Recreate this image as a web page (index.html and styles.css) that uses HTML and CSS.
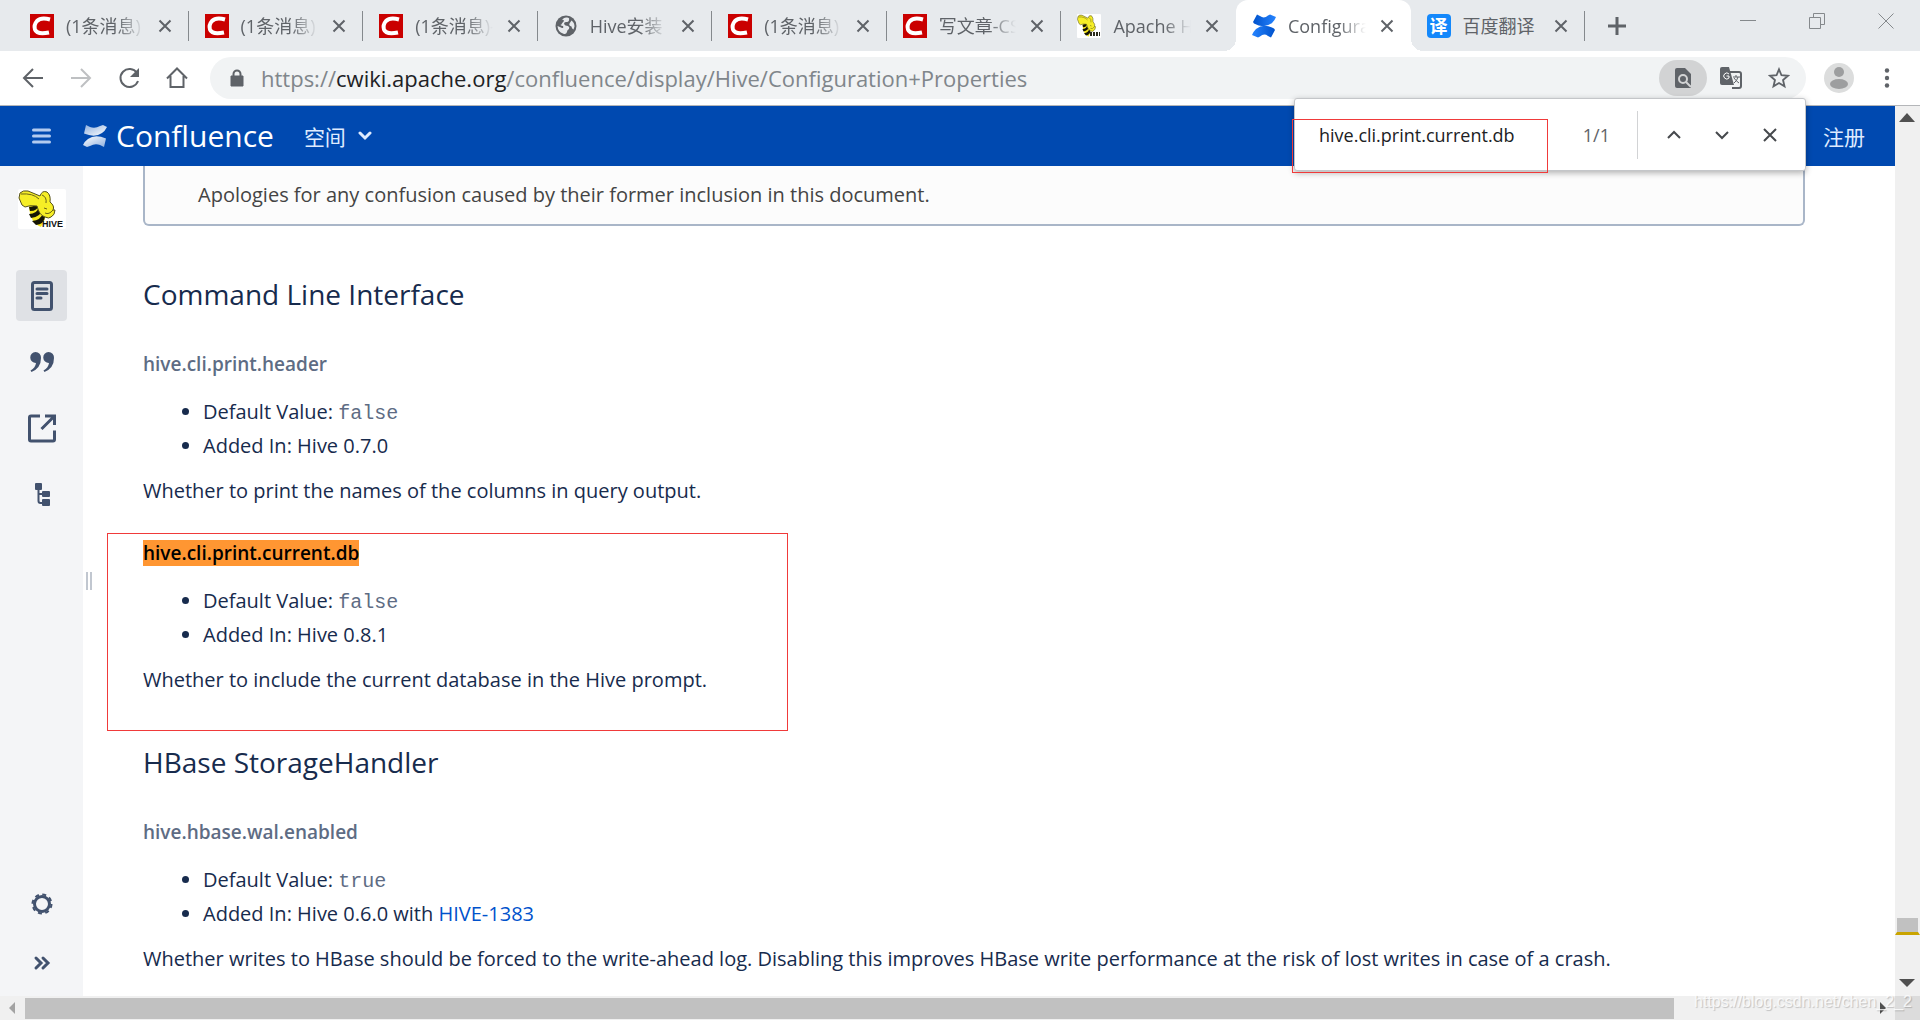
FILE: index.html
```html
<!DOCTYPE html>
<html lang="zh-CN">
<head>
  <meta charset="UTF-8" />
  <meta name="viewport" content="width=device-width, initial-scale=1.0"/>
  <title>Configuration Properties</title>
  <link rel="stylesheet" href="styles.css">
</head>
<body>
  <!-- shared icons -->
  <svg class="sprite" aria-hidden="true">
    <symbol id="csdn" viewBox="0 0 24 24">
      <rect width="24" height="24" fill="#ca0000"/>
      <path d="M20 5.500Q11 3 7 7Q3.500 11 5 15.500Q7 21 19 18.500" fill="none" stroke="#fff" stroke-width="4"/>
    </symbol>
    <symbol id="close" viewBox="0 0 14 14">
      <path d="M1.500 1.500l11 11M12.500 1.500l-11 11" stroke="currentColor" stroke-width="2"/>
    </symbol>
    <symbol id="bee" viewBox="0 0 48 40" preserveAspectRatio="none">
      <rect width="48" height="40" rx="2" fill="#fff"/>
      <path d="M11 17Q17 13 22 18L27 30L23 38Q12 34 11 17z" fill="#f6e71d"/>
      <path d="M11 18q5 0 6-3l3 1q0 6-8 6zM11 25q8 0 10-7l3 2q-1 8-11 9zM14 32q9-1 11-8l2 4q-1 7-9 8z" fill="#151505"/>
      <path d="M2 4Q5 1 10 2L22 7Q24 1 29 3Q33 6 32 13Q37 17 35 21L37 21Q37 26 33 28Q31 30 27 28Q21 26 19 17Q11 16 7 18L4 16L1 9z" fill="#f6ee26" stroke="#55501c"/>
      <path d="M3 5Q15 4 21 10M24 6Q29 8 28 14M26 19l3 1M27 24q4 2 8-3" fill="none" stroke="#6b6418"/>
    </symbol>
    <linearGradient id="blueTop" x1="0" y1="0" x2="1" y2="0"><stop offset="0" stop-color="#0052cc"/><stop offset="1" stop-color="#2684ff"/></linearGradient>
    <linearGradient id="blueBottom" x1="0" y1="0" x2="1" y2="0"><stop offset="0" stop-color="#2684ff"/><stop offset="1" stop-color="#0052cc"/></linearGradient>
    <linearGradient id="whiteTop" x1="0" y1="0" x2="1" y2="1"><stop offset="0" stop-color="#8fb0df"/><stop offset="1" stop-color="#fff"/></linearGradient>
    <linearGradient id="whiteBottom" x1="0" y1="0" x2="1" y2="1"><stop offset="0" stop-color="#fff"/><stop offset="1" stop-color="#8fb0df"/></linearGradient>
  </svg>

  <div class="tabstrip">
    <div class="tabs">
      <div class="tab">
        <svg class="favicon"><use href="#csdn"/></svg>
        <span class="tab-title">(1条消息)</span>
        <button class="tab-close" aria-label="关闭"><svg><use href="#close"/></svg></button>
      </div>
      <div class="tab">
        <svg class="favicon"><use href="#csdn"/></svg>
        <span class="tab-title">(1条消息)</span>
        <button class="tab-close" aria-label="关闭"><svg><use href="#close"/></svg></button>
      </div>
      <div class="tab">
        <svg class="favicon"><use href="#csdn"/></svg>
        <span class="tab-title">(1条消息)-</span>
        <button class="tab-close" aria-label="关闭"><svg><use href="#close"/></svg></button>
      </div>
      <div class="tab">
        <svg class="favicon" viewBox="0 0 24 24">
          <circle cx="12" cy="12" r="10.500" fill="#5f6368"/>
          <path d="M12 3.500Q16 3 15 6Q15 8 12 8Q10 8 10 10Q11 12 14 12Q16 13 15 15Q13 16 13 18Q12 21 9 19.500Q4 18 3.500 12Q6 13 8 14Q10 14 9 12Q6 12 6 9Q8 4 12 3.500z" fill="#e7eaed"/>
          <path d="M8 5.500q2 0 2 1.500q-2 2-3 4l-3-1q1-3 4-4.500z" fill="#5f6368"/>
          <path d="M17.500 6.500q3 2 3 6l-1 3q-2-1-2-3q-3-1-2-3z" fill="#e7eaed"/>
        </svg>
        <span class="tab-title">Hive安装</span>
        <button class="tab-close" aria-label="关闭"><svg><use href="#close"/></svg></button>
      </div>
      <div class="tab">
        <svg class="favicon"><use href="#csdn"/></svg>
        <span class="tab-title">(1条消息)</span>
        <button class="tab-close" aria-label="关闭"><svg><use href="#close"/></svg></button>
      </div>
      <div class="tab">
        <svg class="favicon"><use href="#csdn"/></svg>
        <span class="tab-title">写文章-CS</span>
        <button class="tab-close" aria-label="关闭"><svg><use href="#close"/></svg></button>
      </div>
      <div class="tab no-line">
        <svg class="favicon" viewBox="0 0 24 24"><use href="#bee" width="24" height="24"/><path d="M13 20h10" stroke="#2a2a1c" stroke-width="4" stroke-dasharray="2 1"/></svg>
        <span class="tab-title">Apache H</span>
        <button class="tab-close" aria-label="关闭"><svg><use href="#close"/></svg></button>
      </div>
      <div class="tab active">
        <svg class="favicon" viewBox="0 0 24 24">
          <path d="M5 0.500L8 2Q12 5 16 1.500L18 0.500L24 3Q23 6 20 9Q12 15 2 9.500L1 8z" fill="url(#blueTop)"/>
          <path d="M19 23.500L16 22Q12 19 8 22.500L6 23.500L0 21Q1 18 4 15Q12 9 22 14.500L23 16z" fill="url(#blueBottom)"/>
        </svg>
        <span class="tab-title">Configura</span>
        <button class="tab-close" aria-label="关闭"><svg><use href="#close"/></svg></button>
      </div>
      <div class="tab">
        <span class="favicon favicon-fanyi">译</span>
        <span class="tab-title">百度翻译</span>
        <button class="tab-close" aria-label="关闭"><svg><use href="#close"/></svg></button>
      </div>
    </div>
    <button class="new-tab" aria-label="新标签页"><svg viewBox="0 0 18 18"><path d="M9 0v18M0 9h18" stroke="#5f6368" stroke-width="3"/></svg></button>
    <div class="window-buttons">
      <button aria-label="最小化"><svg viewBox="0 0 16 16"><path d="M0 7.500h16"/></svg></button>
      <button aria-label="还原"><svg viewBox="0 0 16 16"><path d="M0.500 4.500h11v11h-11zM4.500 4v-3.500h11v11h-4"/></svg></button>
      <button aria-label="关闭窗口"><svg viewBox="0 0 16 16"><path d="M0.500 0.500l15 15M15.500 0.500l-15 15"/></svg></button>
    </div>
  </div>

  <div class="toolbar">
    <div class="nav-buttons">
      <button aria-label="后退"><svg viewBox="0 0 24 24"><path d="M22 12H4M12 3L3 12l9 9"/></svg></button>
      <button class="disabled" aria-label="前进"><svg viewBox="0 0 24 24"><path d="M2 12h18M12 3l9 9l-9 9"/></svg></button>
      <button aria-label="重新加载"><svg viewBox="0 0 24 24"><path d="M20 7A9 9 0 1 0 21 15"/><path d="M22 2v9h-9z" class="solid"/></svg></button>
      <button aria-label="主页"><svg viewBox="0 0 24 24"><path d="M2 12.500L12 2.500l10 10M5.500 10v11h13V10"/></svg></button>
    </div>
    <div class="omnibox">
      <svg class="lock" viewBox="0 0 14 18"><path d="M1 7h12v10H1z" fill="#5f6368" stroke="#5f6368" stroke-width="1"/><path d="M3.500 7V5a3.500 3.500 0 0 1 7 0v2" fill="none" stroke="#5f6368" stroke-width="2"/></svg>
      <div class="url">https://<b>cwiki.apache.org</b>/confluence/display/Hive/Configuration+Properties</div>
      <button class="find-pill" aria-label="查找"><svg viewBox="0 0 18 22"><path d="M3 1h8l6 6v14H3q-2 0-2-2V3q0-2 2-2z" fill="#5f6368"/><circle cx="9" cy="12" r="4" fill="#5f6368" stroke="#d2d3d4" stroke-width="2"/><path d="M12 15l5 5" stroke="#d2d3d4" stroke-width="2"/></svg></button>
      <button aria-label="翻译"><svg viewBox="0 0 22 22"><path d="M9 5h10q2 0 2 2v12q0 2-2 2h-7" fill="none" stroke="#5f6368" stroke-width="2"/><path d="M2 0h7l5 18H2q-2 0-2-2V2q0-2 2-2z" fill="#5f6368"/><path d="M9 7a3 3 0 1 0 0 4V9H6.500" fill="none" stroke="#fff" stroke-width="1"/><path d="M13 10h7M16 8v2M18 10q-1 4-4 6M14 11q2 3 5 5" fill="none" stroke="#5f6368"/></svg></button>
      <button aria-label="收藏"><svg viewBox="0 0 24 24"><path d="M12 2.500l2.700 6.500l7 .6l-5.300 4.600l1.600 6.800l-6-3.600l-6 3.600l1.600-6.800L2.300 9.600l7-.6z" fill="none" stroke="#5f6368" stroke-width="2"/></svg></button>
    </div>
    <button class="avatar" aria-label="用户"><svg viewBox="0 0 30 30"><circle cx="15" cy="15" r="15" fill="#dcdddd"/><circle cx="15" cy="9" r="5" fill="#9d9e9f"/><ellipse cx="15" cy="21" rx="9" ry="5" fill="#9d9e9f"/></svg></button>
    <button class="menu" aria-label="菜单"><svg viewBox="0 0 6 20"><circle cx="3" cy="2.500" r="2.200"/><circle cx="3" cy="10" r="2.200"/><circle cx="3" cy="17.500" r="2.200"/></svg></button>

    <div class="findbar">
      <input type="text" aria-label="查找" value="hive.cli.print.current.db">
      <span class="count">1/1</span>
      <div class="find-actions">
        <button aria-label="上一个"><svg viewBox="0 0 14 14"><path d="M1 10l6-6l6 6"/></svg></button>
        <button aria-label="下一个"><svg viewBox="0 0 14 14"><path d="M1 4l6 6l6-6"/></svg></button>
        <button aria-label="关闭查找"><svg viewBox="0 0 14 14"><path d="M1 1l12 12M13 1L1 13"/></svg></button>
      </div>
      <div class="mark mark-find"></div>
    </div>
  </div>

  <div class="viewport">
    <div class="page">
      <header>
        <button class="hamburger" aria-label="菜单"><svg viewBox="0 0 19 16"><path d="M1.500 2h16M1.500 8h16M1.500 14h16" stroke="#b3cbef" stroke-width="3" stroke-linecap="round"/></svg></button>
        <a href="#" class="brand">
          <svg viewBox="0 0 24 24">
            <path d="M3 1L7 3Q12 5 17 2L20 1L24 3Q22 7 19 9Q12 14 1 9.500z" fill="url(#whiteTop)"/>
            <path d="M21 23L17 21Q12 19 7 22L4 23L0 21Q2 17 5 15Q12 10 23 14.500z" fill="url(#whiteBottom)"/>
          </svg>
          Confluence
        </a>
        <a href="#" class="spaces">空间 <svg viewBox="0 0 14 10"><path d="M2 2l5 5l5-5" fill="none" stroke="#deebff" stroke-width="3" stroke-linecap="round"/></svg></a>
        <a href="#" class="signup">注册</a>
      </header>

      <div class="main">
        <nav class="sidebar">
          <a href="#" class="space-logo" aria-label="Hive"><svg viewBox="0 0 48 40"><use href="#bee" width="48" height="40"/><text x="24" y="38" font-size="9" font-weight="700" fill="#111">HIVE</text></svg></a>
          <a href="#" class="side-link current" aria-label="页面"><svg viewBox="0 0 30 30"><rect x="5.500" y="1.500" width="19" height="27" rx="2" fill="none" stroke="#42526e" stroke-width="3"/><path d="M10 8h10M10 12.500h10M10 17h4" stroke="#42526e" stroke-width="3" stroke-linecap="round"/></svg></a>
          <a href="#" class="side-link" aria-label="博客"><svg viewBox="0 0 30 30"><path d="M8.500 5a5.500 5.500 0 0 1 5.500 6q0 10-9.500 14l-1-1.500q5-3 5.500-7.500a5.500 5.500 0 0 1-.500-11zM21.500 5a5.500 5.500 0 0 1 5.500 6q0 10-9.500 14l-1-1.500q5-3 5.500-7.500a5.500 5.500 0 0 1-.500-11z" fill="#42526e"/></svg></a>
          <a href="#" class="side-link" aria-label="快捷方式"><svg viewBox="0 0 30 30"><path d="M13 3H4q-1.500 0-1.500 1.500v22q0 1.500 1.500 1.500h22q1.500 0 1.500-1.500v-9M18 3h9.500v9M27 3.500L14.500 16" fill="none" stroke="#42526e" stroke-width="3"/></svg></a>
          <a href="#" class="side-link" aria-label="页面树"><svg viewBox="0 0 30 30"><rect x="8" y="4" width="7" height="7" rx="1"/><rect x="15" y="12" width="8" height="6" rx="1"/><rect x="15" y="20" width="8" height="7" rx="1"/><path d="M11.500 9v13q0 2 2 2h3M11.500 15h5" fill="none" stroke="#42526e" stroke-width="2"/></svg></a>
          <a href="#" class="side-link settings" aria-label="设置"><svg viewBox="0 0 30 30"><circle cx="15" cy="15" r="7.500" fill="none" stroke="#42526e" stroke-width="3"/><circle cx="15" cy="15" r="9.500" fill="none" stroke="#42526e" stroke-width="2" stroke-dasharray="4 3.460"/></svg></a>
          <a href="#" class="side-link expand" aria-label="展开"><svg viewBox="0 0 30 30"><path d="M9 10l5 5l-5 5M16 10l5 5l-5 5" fill="none" stroke="#42526e" stroke-width="3" stroke-linecap="round"/></svg></a>
        </nav>
        <div class="splitter"></div>

        <main class="content">
          <div class="panel">Apologies for any confusion caused by their former inclusion in this document.</div>

          <h2>Command Line Interface</h2>
          <section>
            <h3>hive.cli.print.header</h3>
            <ul>
              <li>Default Value: <code>false</code></li>
              <li>Added In: Hive 0.7.0</li>
            </ul>
            <p>Whether to print the names of the columns in query output.</p>
          </section>
          <section class="marked">
            <h3><mark>hive.cli.print.current.db</mark></h3>
            <ul>
              <li>Default Value: <code>false</code></li>
              <li>Added In: Hive 0.8.1</li>
            </ul>
            <p>Whether to include the current database in the Hive prompt.</p>
            <div class="mark mark-section"></div>
          </section>

          <h2>HBase StorageHandler</h2>
          <section>
            <h3>hive.hbase.wal.enabled</h3>
            <ul>
              <li>Default Value: <code>true</code></li>
              <li>Added In: Hive 0.6.0 with <a href="#">HIVE-1383</a></li>
            </ul>
            <p>Whether writes to HBase should be forced to the write-ahead log. Disabling this improves HBase write performance at the risk of lost writes in case of a crash.</p>
          </section>
        </main>
      </div>
    </div>

    <div class="vscroll">
      <svg viewBox="0 0 24 24"><path d="M4 16h16l-8-9z" fill="#505050"/></svg>
      <div class="vthumb-space"></div>
      <div class="vthumb"></div>
      <div class="vthumb-rest"></div>
      <svg viewBox="0 0 24 24"><path d="M4 7h16l-8 8z" fill="#505050"/></svg>
    </div>
    <div class="hscroll">
      <svg viewBox="0 0 24 24"><path d="M15 6v12l-6-6z" fill="#a3a3a3"/></svg>
      <div class="htrack"><div class="hthumb"></div></div>
      <svg viewBox="0 0 24 24"><path d="M9 6v12l6-6z" fill="#505050"/></svg>
    </div>
    <div class="corner"></div>
    <div class="watermark">https://blog.csdn.net/chen_2_2</div>
  </div>
</body>
</html>
```
FILE: styles.css
```css
* {
  box-sizing: border-box;
}

body {
  margin: 0;
  height: 100vh;
  display: flex;
  flex-direction: column;
  overflow: hidden;
  font-family: "Open Sans", "Noto Sans CJK SC", sans-serif;
  font-size: 20px;
  color: #172b4d;
  background: #fff;
}

button {
  padding: 0;
  border: 0;
  background: none;
  display: flex;
  align-items: center;
  justify-content: center;
}

a {
  color: #0052cc;
  text-decoration: none;
}

.sprite {
  position: absolute;
  width: 0;
  height: 0;
}

/* tab strip */
.tabstrip {
  display: flex;
  height: 51px;
  padding-left: 14px;
  background: #e7eaed;
}

.tabs {
  display: flex;
  flex: 0 1 1571px;
}

.tab {
  position: relative;
  flex: 1;
  display: flex;
  align-items: center;
  padding: 0 17px 0 16px;
  min-width: 0;
}

.tab::after {
  content: "";
  position: absolute;
  right: 0;
  top: 11px;
  width: 1px;
  height: 30px;
  background: #85898d;
}

.tab.no-line::after {
  display: none;
}

.tab.active {
  background: #fff;
  border-radius: 12px 12px 0 0;
}

/* curved feet of the active tab */
.tab.active::before,
.tab.active::after {
  content: "";
  position: absolute;
  top: auto;
  bottom: 0;
  width: 12px;
  height: 12px;
}

.tab.active::before {
  left: -12px;
  background: radial-gradient(circle at 0 0, transparent 12px, #fff 12px);
}

.tab.active::after {
  right: -12px;
  background: radial-gradient(circle at 12px 0, transparent 12px, #fff 12px);
}

.favicon {
  flex: none;
  width: 24px;
  height: 24px;
}

.favicon-fanyi {
  border-radius: 4px;
  background: #1488fb;
  color: #fff;
  font-size: 18px;
  font-weight: 700;
  line-height: 24px;
  text-align: center;
}

.tab-title {
  flex: 1;
  min-width: 0;
  margin: 0 14px 0 12px;
  overflow: hidden;
  white-space: nowrap;
  font-size: 18px;
  line-height: 28px;
  color: #5f6368;
  -webkit-mask-image: linear-gradient(to right, #000 65%, transparent);
  mask-image: linear-gradient(to right, #000 65%, transparent);
}

.tab:last-child .tab-title {
  -webkit-mask-image: none;
  mask-image: none;
}

.tab-close {
  color: #5f6368;
}

.tab-close svg {
  width: 14px;
  height: 14px;
}

.new-tab {
  width: 64px;
}

.new-tab svg {
  width: 18px;
  height: 18px;
}

.window-buttons {
  display: flex;
  height: 42px;
  margin-left: auto;
}

.window-buttons button {
  width: 69px;
}

.window-buttons svg {
  width: 16px;
  height: 16px;
  fill: none;
  stroke: #85898c;
}

/* address bar */
.toolbar {
  position: relative;
  z-index: 2;
  display: flex;
  align-items: center;
  height: 55px;
  padding-left: 9px;
  border-bottom: 1px solid #b4b6b9;
}

.nav-buttons {
  display: flex;
  width: 201px;
}

.nav-buttons button {
  width: 48px;
}

.nav-buttons svg {
  width: 24px;
  height: 24px;
  fill: none;
  stroke: #5f6368;
  stroke-width: 2;
}

.nav-buttons .solid {
  fill: #5f6368;
  stroke: none;
}

.nav-buttons .disabled {
  opacity: .4;
}

.omnibox {
  flex: 1;
  display: flex;
  align-items: center;
  height: 42px;
  padding: 0 3px 0 20px;
  border-radius: 21px;
  background: #f1f3f4;
}

.lock {
  width: 14px;
  height: 18px;
  margin-right: 17px;
}

.url {
  flex: 1;
  font-size: 22px;
  line-height: 30px;
  color: #80868b;
}

.url b {
  font-weight: 400;
  color: #202124;
}

.omnibox button {
  width: 48px;
  height: 36px;
}

.omnibox svg {
  height: 22px;
}

.omnibox .find-pill {
  border-radius: 18px;
  background: #d2d3d4;
}

.avatar {
  width: 66px;
}

.avatar svg {
  width: 30px;
  height: 30px;
}

.menu {
  width: 30px;
  margin-right: 18px;
}

.menu svg {
  width: 6px;
  height: 20px;
  fill: #5f6368;
}

/* find in page */
.findbar {
  position: absolute;
  top: 47px;
  right: 114px;
  width: 512px;
  height: 73px;
  display: flex;
  align-items: center;
  padding-left: 24px;
  background: #fff;
  border: 1px solid #c4c6c9;
  border-radius: 3px;
  box-shadow: 0 2px 6px rgba(0, 0, 0, .3);
}

.findbar input {
  flex: 1;
  min-width: 0;
  padding: 0;
  border: 0;
  outline: 0;
  background: none;
  font: inherit;
  font-size: 18px;
  color: #202124;
}

.count {
  padding-right: 27px;
  font-size: 18px;
  color: #5f6368;
}

.find-actions {
  display: flex;
  align-items: center;
  height: 48px;
  padding: 0 11px 0 12px;
  border-left: 1px solid #d2d3d5;
}

.find-actions button {
  width: 48px;
}

.find-actions svg {
  width: 14px;
  height: 14px;
  fill: none;
  stroke: #46494d;
  stroke-width: 2;
}

/* red frames drawn over the page */
.mark {
  position: absolute;
  border: 1px solid #f03a3a;
  pointer-events: none;
}

.mark-find {
  top: 20px;
  left: -3px;
  width: 256px;
  height: 54px;
}

.mark-section {
  top: -5px;
  left: -36px;
  bottom: -34px;
  width: 681px;
}

/* page */
.viewport {
  position: relative;
  flex: 1;
  min-height: 0;
  display: grid;
  grid-template-columns: 1fr 25px;
  grid-template-rows: 1fr 24px;
}

.page {
  display: flex;
  flex-direction: column;
  min-height: 0;
  overflow: hidden;
}

header {
  flex: none;
  display: flex;
  align-items: center;
  height: 60px;
  padding: 0 30px 0 32px;
  background: #0049b0;
}

header a {
  color: #deebff;
}

.hamburger svg {
  width: 19px;
  height: 16px;
}

.brand {
  display: flex;
  align-items: center;
  gap: 9px;
  margin: 0 30px 0 32px;
  font-size: 30px;
  line-height: 40px;
}

header .brand {
  color: #fff;
}

.brand svg {
  width: 24px;
  height: 24px;
}

.spaces {
  display: flex;
  align-items: center;
  gap: 12px;
  font-size: 21px;
}

.spaces svg {
  width: 14px;
  height: 10px;
}

.signup {
  margin-left: auto;
  font-size: 21px;
}

.main {
  flex: 1;
  min-height: 0;
  display: flex;
}

.sidebar {
  flex: none;
  width: 83px;
  display: flex;
  flex-direction: column;
  align-items: center;
  padding: 23px 0 8px;
  background: #f4f5f7;
}

.space-logo {
  height: 40px;
  margin-bottom: 41px;
}

.space-logo svg {
  width: 48px;
  height: 40px;
  font-family: "Liberation Sans", sans-serif;
}

.side-link {
  display: flex;
  align-items: center;
  justify-content: center;
  width: 51px;
  height: 51px;
  margin-bottom: 15px;
  border-radius: 4px;
  fill: #42526e;
}

.side-link svg {
  width: 30px;
  height: 30px;
}

.side-link.current {
  background: #dfe1e5;
}

.side-link.settings {
  margin: auto 0 8px;
}

.side-link.expand {
  margin-bottom: 0;
}

.splitter {
  align-self: center;
  width: 6px;
  height: 18px;
  margin-left: 3px;
  border: solid #c1c7d0;
  border-width: 0 2px;
}

.content {
  flex: 1;
  min-width: 0;
  padding: 0 90px 0 51px;
  line-height: 34px;
}

.panel {
  margin-bottom: 50px;
  padding: 12px 53px;
  border: 2px solid #a9b6c8;
  border-top: 0;
  border-radius: 0 0 6px 6px;
  background: #fcfcfc;
  color: #444;
}

h2 {
  margin: 47px 0 37px;
  font-size: 28px;
  font-weight: 400;
  line-height: 36px;
}

h3 {
  margin: 30px 0 16px;
  font-size: 19px;
  font-weight: 600;
  line-height: 30px;
  color: #5e6c84;
}

ul {
  margin: 16px 0 11px;
  padding-left: 60px;
}

p {
  margin: 0;
}

code {
  font-family: "Liberation Mono", monospace;
  font-size: 20px;
  line-height: 20px;
  color: #5e6c84;
}

.marked {
  position: relative;
}

mark {
  background: #ff9632;
  color: #000;
}

/* scrollbars */
.vscroll {
  display: flex;
  flex-direction: column;
  background: #f0f0f0;
}

.vscroll svg,
.hscroll svg {
  flex: none;
  width: 24px;
  height: 24px;
}

.vthumb-space {
  flex: 788;
}

.vthumb {
  height: 17px;
  border: solid #f0f0f0;
  border-width: 0 2px;
  background: #c1c1c1;
  border-bottom: 3px solid #c9a400;
}

.vthumb-rest {
  flex: 37;
}

.hscroll {
  display: flex;
  background: #f0f0f0;
}

.htrack {
  flex: 1;
  padding: 2px 1px;
}

.hthumb {
  width: calc(100% - 196px);
  height: 21px;
  background: #c1c1c1;
}

.corner {
  background: #dcdcdc;
}

.watermark {
  position: absolute;
  right: 8px;
  bottom: 8px;
  font-family: "Liberation Sans", sans-serif;
  font-size: 16px;
  line-height: 20px;
  color: rgba(255, 255, 255, .8);
  text-shadow: 1px 1px 1px rgba(0, 0, 0, .2);
}
```
